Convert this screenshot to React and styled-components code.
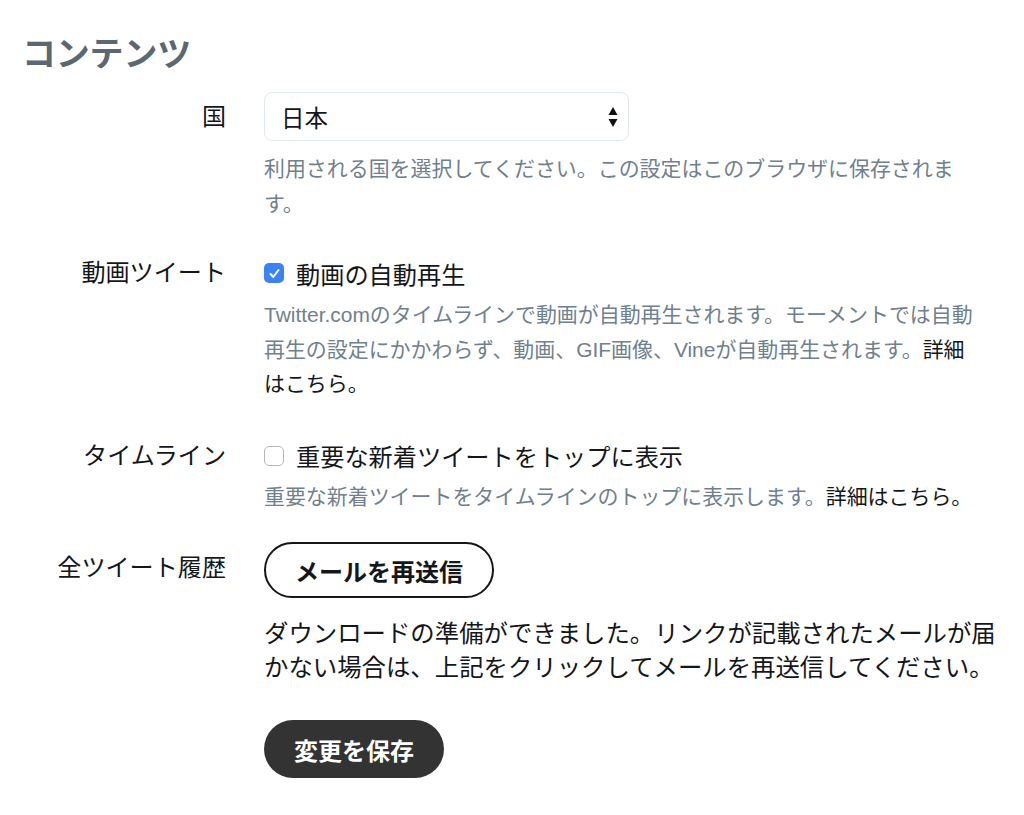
import React from 'react';
import styled, { createGlobalStyle } from 'styled-components';

const GlobalStyle = createGlobalStyle`
  body {
    margin: 0;
    background: #ffffff;
    font-family: "Liberation Sans", "Noto Sans CJK JP", sans-serif;
    color: #14171a;
  }
`;

const Page = styled.div`
  padding-top: 34px;
  width: 1024px;
`;

const Title = styled.h2`
  margin: 0 0 18px 22px;
  font-size: 34px;
  line-height: 40px;
  font-weight: 700;
  color: #5b6872;
  letter-spacing: -0.2px;
`;

const Row = styled.div`
  display: grid;
  grid-template-columns: 226px 750px;
  column-gap: 38px;
  margin-top: ${props => props.$gap || 0}px;
`;

const Label = styled.div`
  text-align: right;
  font-size: 24.1px;
  line-height: 34px;
  padding-top: ${props => props.$offset || 0}px;
  white-space: nowrap;
`;

const Field = styled.div`
  display: flex;
  flex-direction: column;
  align-items: flex-start;
`;

const SelectBox = styled.div`
  position: relative;
  box-sizing: border-box;
  width: 365px;
  height: 49px;
  border: 1px solid #e1e8ed;
  border-radius: 8px;
  padding-left: 16px;
  display: flex;
  align-items: center;
  font-size: 23.5px;
  background: #ffffff;
`;

const Arrows = styled.svg`
  position: absolute;
  right: 10px;
  top: 50%;
  transform: translateY(-50%);
`;

const Help = styled.p`
  margin: ${props => props.$top || 0}px 0 0 0;
  font-size: 20.95px;
  line-height: 34.5px;
  color: #6f808e;
  white-space: nowrap;
`;

const Link = styled.span`
  color: #14171a;
`;

const CheckLine = styled.label`
  display: flex;
  align-items: center;
  gap: 12px;
  height: 34px;
  font-size: 24.2px;
`;

const Box = styled.span`
  box-sizing: border-box;
  width: 20px;
  height: 20px;
  border-radius: 5px;
  display: inline-flex;
  align-items: center;
  justify-content: center;
  background: ${props => props.$checked ? '#3b82f6' : '#ffffff'};
  border: ${props => props.$checked ? 'none' : '1.5px solid #b8b8b8'};
`;

const OutlineButton = styled.button`
  box-sizing: border-box;
  height: 56px;
  padding: 0 29px;
  border: 2px solid #14171a;
  border-radius: 28px;
  background: #ffffff;
  font-family: inherit;
  font-size: 24px;
  font-weight: 700;
  color: #14171a;
`;

const Description = styled.p`
  margin: 19px 0 0 0;
  font-size: 24.4px;
  line-height: 34px;
  white-space: nowrap;
`;

const SaveButton = styled.button`
  box-sizing: border-box;
  height: 58px;
  padding: 0 30px;
  border: none;
  border-radius: 29px;
  background: #333333;
  color: #ffffff;
  font-family: inherit;
  font-size: 24px;
  font-weight: 700;
`;

const Checkbox = ({ checked, children }) => (
  <CheckLine>
    <Box $checked={checked}>
      {checked && (
        <svg width="13" height="13" viewBox="0 0 13 13">
          <path d="M2.5 7 L5.3 10 L10.5 3" fill="none" stroke="#fff" strokeWidth="2" strokeLinecap="round" strokeLinejoin="round" />
        </svg>
      )}
    </Box>
    {children}
  </CheckLine>
);

export default function App() {
  return (
    <>
      <GlobalStyle />
      <Page>
        <Title>コンテンツ</Title>

        <Row>
          <Label $offset={8}>国</Label>
          <Field>
            <SelectBox>
              日本
              <Arrows width="10" height="22" viewBox="0 0 10 22">
                <path d="M5 1 L9.5 9 L0.5 9 Z" fill="#111" />
                <path d="M5 21 L9.5 13 L0.5 13 Z" fill="#111" />
              </Arrows>
            </SelectBox>
            <Help $top={11}>
              利用される国を選択してください。この設定はこのブラウザに保存されま
              <br />
              す。
            </Help>
          </Field>
        </Row>

        <Row $gap={35}>
          <Label>動画ツイート</Label>
          <Field>
            <Checkbox checked>動画の自動再生</Checkbox>
            <Help $top={8}>
              Twitter.comのタイムラインで動画が自動再生されます。モーメントでは自動
              <br />
              再生の設定にかかわらず、動画、GIF画像、Vineが自動再生されます。<Link>詳細</Link>
              <br />
              <Link>はこちら。</Link>
            </Help>
          </Field>
        </Row>

        <Row $gap={37}>
          <Label>タイムライン</Label>
          <Field>
            <Checkbox>重要な新着ツイートをトップに表示</Checkbox>
            <Help $top={7}>
              重要な新着ツイートをタイムラインのトップに表示します。<Link>詳細はこちら。</Link>
            </Help>
          </Field>
        </Row>

        <Row $gap={28}>
          <Label $offset={9}>全ツイート履歴</Label>
          <Field>
            <OutlineButton>メールを再送信</OutlineButton>
            <Description>
              ダウンロードの準備ができました。リンクが記載されたメールが届
              <br />
              かない場合は、上記をクリックしてメールを再送信してください。
            </Description>
          </Field>
        </Row>

        <Row $gap={35}>
          <div />
          <Field>
            <SaveButton>変更を保存</SaveButton>
          </Field>
        </Row>
      </Page>
    </>
  );
}
